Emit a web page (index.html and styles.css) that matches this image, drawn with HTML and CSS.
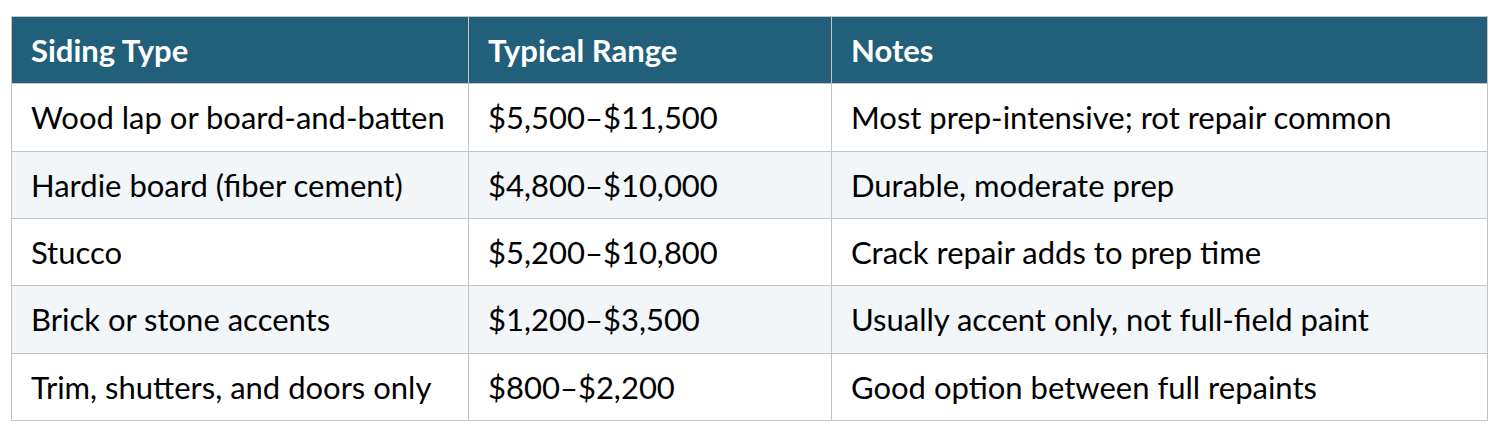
FILE: index.html
```html
<!DOCTYPE html>
<html>
<head>
<meta charset="utf-8">
<link rel="stylesheet" href="styles.css">
</head>
<body>
<table class="price-table">
  <colgroup>
    <col class="col-type">
    <col class="col-range">
    <col class="col-notes">
  </colgroup>
  <thead>
    <tr><th>Siding Type</th><th>Typical Range</th><th>Notes</th></tr>
  </thead>
  <tbody>
    <tr><td>Wood lap or board-and-batten</td><td>$5,500–$11,500</td><td>Most prep-intensive; rot repair common</td></tr>
    <tr class="alt"><td>Hardie board (fiber cement)</td><td>$4,800–$10,000</td><td>Durable, moderate prep</td></tr>
    <tr><td>Stucco</td><td>$5,200–$10,800</td><td>Crack repair adds to prep time</td></tr>
    <tr class="alt"><td>Brick or stone accents</td><td>$1,200–$3,500</td><td>Usually accent only, not full-field paint</td></tr>
    <tr><td>Trim, shutters, and doors only</td><td>$800–$2,200</td><td>Good option between full repaints</td></tr>
  </tbody>
</table>
</body>
</html>
```
FILE: styles.css
```css
html, body {
  margin: 0;
  padding: 0;
  background: #ffffff;
}
body {
  padding: 16px 0 0 11px;
  font-family: Lato, "Open Sans", sans-serif;
}
.price-table {
  border-collapse: collapse;
  table-layout: fixed;
  width: 1476px;
  font-size: 31px;
  color: #000000;
}
.col-type { width: 457px; }
.col-range { width: 363px; }
.col-notes { width: 656px; }
.price-table th,
.price-table td {
  border: 1px solid #c4c4c4;
  height: 67.33px;
  padding: 0 0 0 19px;
  text-align: left;
  vertical-align: middle;
  box-sizing: border-box;
  white-space: nowrap;
}
.price-table th {
  background: #215f7b;
  color: #ffffff;
  font-weight: 700;
}
.price-table td {
  font-weight: 400;
}
.price-table tr.alt td {
  background: #f2f6f9;
}
```
